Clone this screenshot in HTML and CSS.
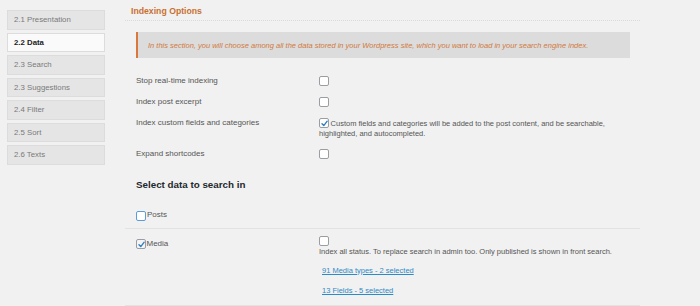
FILE: index.html
```html
<!DOCTYPE html>
<html>
<head>
<meta charset="utf-8">
<link rel="stylesheet" href="styles.css">
</head>
<body>
<div class="page">
  <nav class="tabs">
    <div class="tab">2.1 Presentation</div>
    <div class="tab active">2.2 Data</div>
    <div class="tab">2.3 Search</div>
    <div class="tab">2.3 Suggestions</div>
    <div class="tab">2.4 Filter</div>
    <div class="tab">2.5 Sort</div>
    <div class="tab">2.6 Texts</div>
  </nav>
  <main class="main">
    <h2 class="title">Indexing Options</h2>
    <div class="notice">In this section, you will choose among all the data stored in your Wordpress site, which you want to load in your search engine index.</div>
    <div class="options">
      <div class="row"><div class="label">Stop real-time indexing</div><div class="ctrl"><span class="cb"></span></div></div>
      <div class="row"><div class="label">Index post excerpt</div><div class="ctrl"><span class="cb"></span></div></div>
      <div class="row"><div class="label">Index custom fields and categories</div><div class="ctrl desc"><span class="cb inline checked"><svg viewBox="0 0 10 10"><path d="M2.2 5.2 L4.2 7.3 L8 2.4" fill="none" stroke="#2f7fc0" stroke-width="1.5" stroke-linecap="round" stroke-linejoin="round"/></svg></span> Custom fields and categories will be added to the post content, and be searchable, highlighted, and autocompleted.</div></div>
      <div class="row"><div class="label">Expand shortcodes</div><div class="ctrl"><span class="cb"></span></div></div>
    </div>
    <h3 class="subtitle">Select data to search in</h3>
    <div class="posts"><span class="cb focus"></span><span class="lbl">Posts</span></div>
    <div class="media">
      <div class="media-label"><span class="cb checked gray"><svg viewBox="0 0 10 10"><path d="M2.2 5.2 L4.2 7.3 L8 2.4" fill="none" stroke="#2f7fc0" stroke-width="1.5" stroke-linecap="round" stroke-linejoin="round"/></svg></span><span class="lbl">Media</span></div>
      <div class="media-ctrl">
        <span class="cb"></span>
        <div class="help">Index all status. To replace search in admin too. Only published is shown in front search.</div>
        <a class="link first" href="#">91 Media types - 2 selected</a>
        <a class="link" href="#">13 Fields - 5 selected</a>
      </div>
    </div>
  </main>
</div>
</body>
</html>
```
FILE: styles.css
```css
html, body {
  margin: 0;
  padding: 0;
  background: #f1f1f1;
  font-family: "Liberation Sans", Arial, sans-serif;
  color: #555;
  font-size: 7.5px;
}
.page {
  display: flex;
  width: 700px;
  height: 306px;
  overflow: hidden;
}
.tabs {
  display: flex;
  flex-direction: column;
  gap: 3px;
  padding: 10px 0 0 7px;
  width: 98px;
  flex-shrink: 0;
}
.tab {
  box-sizing: border-box;
  height: 19.5px;
  background: #e5e5e5;
  border: 1px solid #dcdcdc;
  color: #7a7a7a;
  padding-left: 6px;
  display: flex;
  align-items: center;
  font-size: 7.8px;
}
.tab.active {
  background: #fafafa;
  color: #222;
  font-weight: bold;
}
.main {
  margin-left: 20px;
  width: 515px;
  flex-shrink: 0;
}
.title {
  margin: 0;
  height: 21px;
  box-sizing: border-box;
  padding: 6px 0 0 6px;
  font-size: 8.7px;
  color: #c8702f;
  font-weight: bold;
  border-bottom: 1px dotted #dadada;
}
.notice {
  margin: 11px 10px 0 11px;
  height: 26px;
  box-sizing: border-box;
  background: #dcdcdc;
  border-left: 2px solid #d9783a;
  padding-left: 10px;
  display: flex;
  align-items: center;
  font-style: italic;
  color: #d0793d;
  font-size: 7.5px;
}
.options {
  margin-top: 18px;
  padding-left: 11px;
  display: flex;
  flex-direction: column;
  gap: 11px;
}
.row {
  display: grid;
  grid-template-columns: 183px 1fr;
  line-height: 10px;
  height: 10px;
}
.row:nth-child(3) {
  height: 20px;
}
.label {
  font-size: 8px;
}
.ctrl {
  width: 296px;
}
.ctrl .cb {
  display: block;
}
.ctrl .cb.inline {
  display: inline-block;
}
.cb {
  display: inline-block;
  box-sizing: border-box;
  width: 9.5px;
  height: 9.5px;
  border: 1px solid #9a9ea3;
  border-radius: 2px;
  background: #fff;
  vertical-align: -2px;
  position: relative;
}
.cb svg {
  position: absolute;
  left: -0.5px;
  top: -0.5px;
  width: 9px;
  height: 9px;
}
.cb.focus {
  border: 1.5px solid #5b9dd9;
  width: 10px;
  height: 10px;
}
.cb.gray {
  background: #f4f4f4;
}
.subtitle {
  margin: 19px 0 0 11px;
  font-size: 9.8px;
  color: #23282d;
  font-weight: bold;
  line-height: 14px;
}
.posts {
  margin: 19px 0 0 11px;
  display: flex;
  align-items: flex-start;
  gap: 1px;
  height: 17px;
}
.lbl {
  font-size: 8px;
  line-height: 8px;
}
.media {
  border-top: 1px solid #e2e2e2;
  border-bottom: 1px solid #e2e2e2;
  display: grid;
  grid-template-columns: 183px 1fr;
  padding: 7px 0 0 11px;
  height: 69px;
}
.media-label {
  display: flex;
  align-items: flex-start;
  gap: 1px;
  padding-top: 3px;
}
.media-label .lbl {
  margin-top: 1px;
}
.media-ctrl .cb {
  display: block;
}
.help {
  margin-top: 1px;
  line-height: 10px;
}
.link {
  display: block;
  color: #2e8ac6;
  text-decoration: underline;
  margin-left: 3px;
  margin-top: 10px;
  line-height: 10px;
}
.link.first {
  margin-top: 9px;
}
```
